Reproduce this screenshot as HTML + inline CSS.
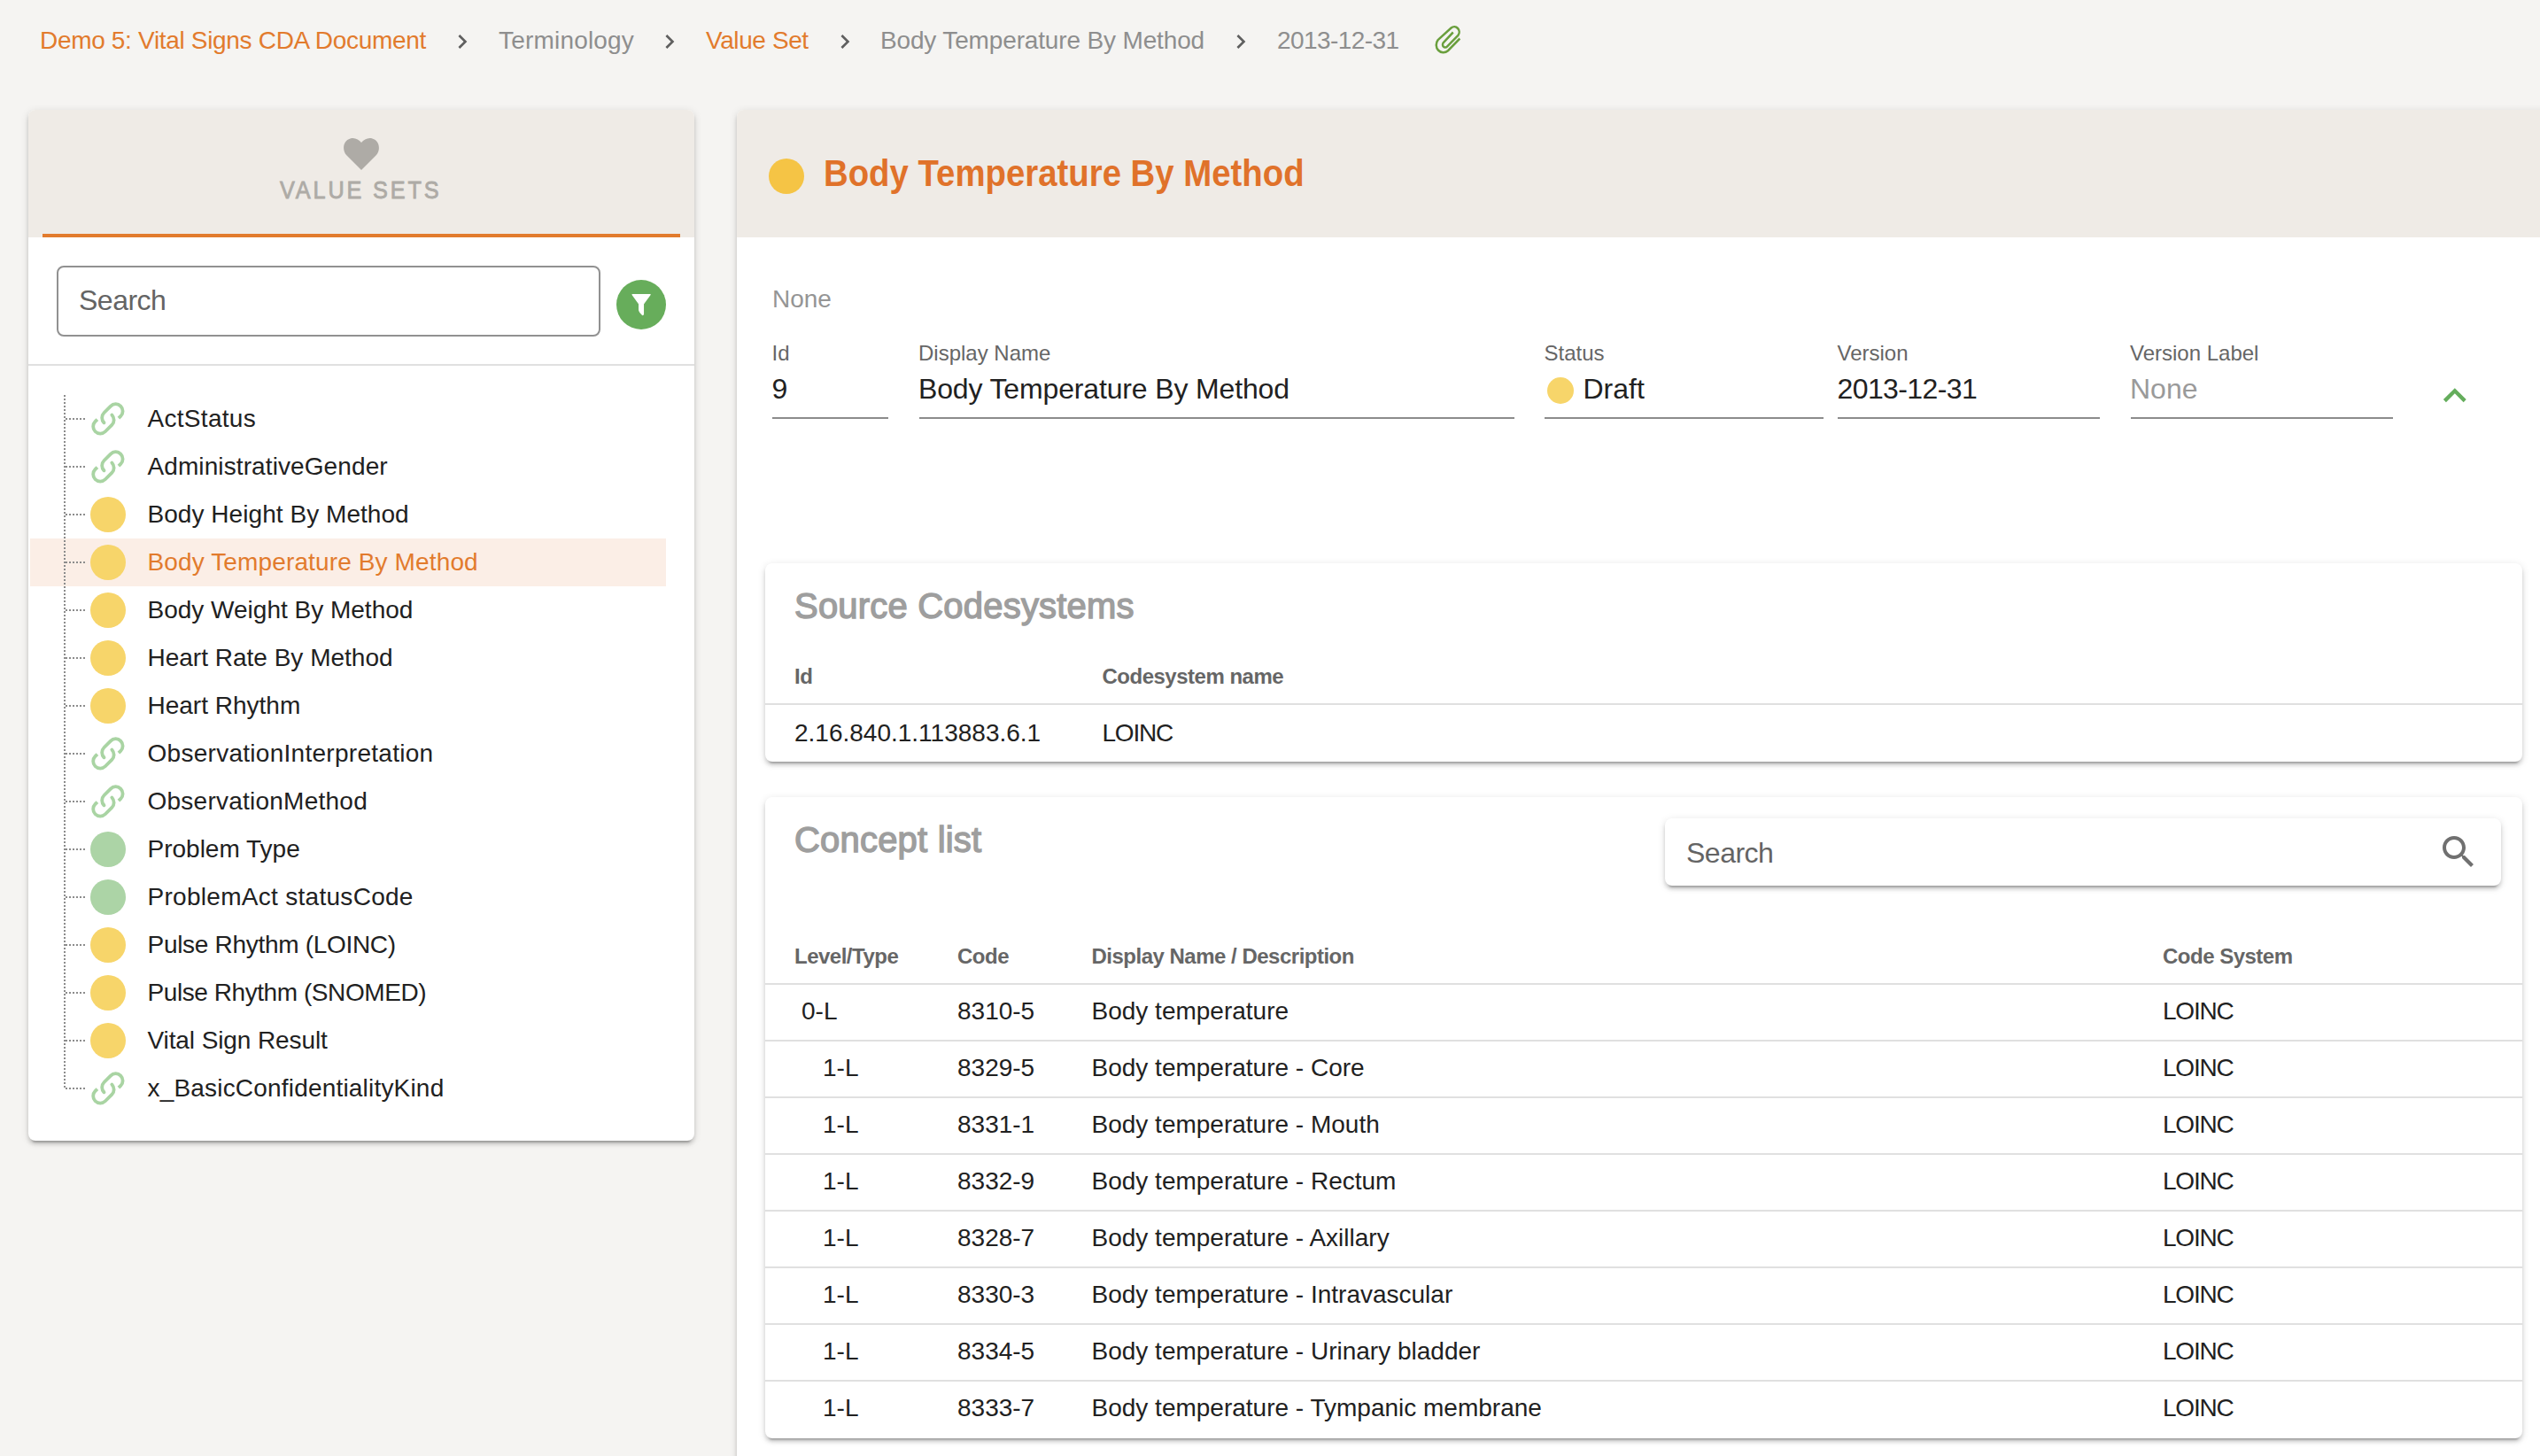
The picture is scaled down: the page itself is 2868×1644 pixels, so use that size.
<!DOCTYPE html>
<html><head><meta charset="utf-8"><title>Body Temperature By Method</title>
<style>
html,body{margin:0;padding:0;width:2868px;height:1644px;overflow:hidden;background:#f5f4f2;}
body{position:relative;font-family:"Liberation Sans", sans-serif;}
.t{position:absolute;white-space:nowrap;line-height:1;}
.r{position:absolute;}
</style></head><body>
<div class="t" style="left:45.00px;top:32.30px;font-size:28px;color:#e27b2d;font-weight:400;letter-spacing:-0.32px;">Demo 5: Vital Signs CDA Document</div>
<svg class="r" style="left:506.4px;top:30.9px" width="32" height="32" viewBox="0 0 24 24"><path d="M10 6L8.59 7.41 13.17 12l-4.58 4.59L10 18l6-6z" fill="#5f5f5f"/></svg>
<div class="t" style="left:563.00px;top:32.30px;font-size:28px;color:#8e8e8e;font-weight:400;letter-spacing:0.19px;">Terminology</div>
<svg class="r" style="left:740.0px;top:30.9px" width="32" height="32" viewBox="0 0 24 24"><path d="M10 6L8.59 7.41 13.17 12l-4.58 4.59L10 18l6-6z" fill="#5f5f5f"/></svg>
<div class="t" style="left:797.00px;top:32.30px;font-size:28px;color:#e27b2d;font-weight:400;letter-spacing:-0.4px;">Value Set</div>
<svg class="r" style="left:937.5px;top:30.9px" width="32" height="32" viewBox="0 0 24 24"><path d="M10 6L8.59 7.41 13.17 12l-4.58 4.59L10 18l6-6z" fill="#5f5f5f"/></svg>
<div class="t" style="left:994.00px;top:32.30px;font-size:28px;color:#8e8e8e;font-weight:400;letter-spacing:-0.15px;">Body Temperature By Method</div>
<svg class="r" style="left:1385.0px;top:30.9px" width="32" height="32" viewBox="0 0 24 24"><path d="M10 6L8.59 7.41 13.17 12l-4.58 4.59L10 18l6-6z" fill="#5f5f5f"/></svg>
<div class="t" style="left:1442.00px;top:32.30px;font-size:28px;color:#8e8e8e;font-weight:400;letter-spacing:-0.56px;">2013-12-31</div>
<svg class="r" style="left:1600px;top:15px" width="70" height="60" viewBox="1600 15 70 60"><path transform="translate(1636 44) scale(1.03 1.1) translate(-1636 -44)" d="M1648 43.5 L1635 56 A7.8 7.8 0 0 1 1624 45 L1638.5 32.7 A5.4 5.4 0 0 1 1646.1 40.3 L1634 51.8 A2.8 2.8 0 0 1 1630 47.8 L1640.6 37.2" fill="none" stroke="#6a9f3d" stroke-width="2.4" stroke-linecap="butt"/></svg>
<div class="r" style="left:32px;top:124px;width:752px;height:1164px;background:#fff;border-radius:8px;box-shadow:0 6px 2px -4px rgba(0,0,0,.2),0 4px 4px 0 rgba(0,0,0,.14),0 2px 10px 0 rgba(0,0,0,.12);"></div>
<div class="r" style="left:32px;top:124px;width:752px;height:144px;background:#efebe6;border-radius:8px 8px 0 0;"></div>
<div class="r" style="left:48px;top:264px;width:720px;height:4px;background:#e27b2d;"></div>
<svg class="r" style="left:387px;top:155px" width="42" height="38" viewBox="0 0 42 38"><path d="M21 37 L4.5 20.5 C-1 15 0 4 8.5 1.5 C13.5 0 18 2.5 21 6 C24 2.5 28.5 0 33.5 1.5 C42 4 43 15 37.5 20.5 Z" fill="#aeaba6"/></svg>
<div class="t" style="left:315.50px;top:201.30px;font-size:28px;color:#aeaba6;font-weight:400;letter-spacing:3.2px;-webkit-text-stroke:0.9px #aeaba6;transform:scaleX(0.9);transform-origin:0 0;">VALUE SETS</div>
<div class="r" style="left:64px;top:300px;width:614px;height:80px;box-sizing:border-box;border:2px solid #919191;border-radius:8px;background:#fff;"></div>
<div class="t" style="left:89.00px;top:322.91px;font-size:32px;color:#646464;font-weight:400;letter-spacing:-0.5px;">Search</div>
<div class="r" style="left:696px;top:316px;width:56px;height:56px;background:#67ad5b;border-radius:50%;"></div>
<svg class="r" style="left:690px;top:310px" width="70" height="70" viewBox="690 310 70 70"><path d="M714 332.6 L734.2 332.6 L726.5 343.3 L726.5 355 L725.5 355.6 L722.5 352.3 Q721.6 351 721.6 349.5 L721.6 343.3 Z" fill="#fff" stroke="#fff" stroke-width="1.1" stroke-linejoin="round"/></svg>
<div class="r" style="left:32px;top:411px;width:752px;height:2px;background:#e0e0e0;"></div>
<div class="r" style="left:34px;top:608px;width:718px;height:54px;background:#fbeee6;"></div>
<div class="r" style="left:72px;top:446px;width:2px;height:783px;background:repeating-linear-gradient(to bottom,#8c8c8c 0 2px,transparent 2px 4px);"></div>
<div class="r" style="left:74px;top:472px;width:22px;height:2px;background:repeating-linear-gradient(to right,#8c8c8c 0 2px,transparent 2px 4px);"></div>
<svg class="r" style="left:103px;top:454px" width="38" height="38" viewBox="0 0 38 38"><g transform="translate(18.9 18.9) rotate(-45)" fill="none" stroke="#a9d4a3" stroke-width="3.8" stroke-linecap="butt"><path d="M9 8 L12.3 8 A8 8 0 0 0 12.3 -8 L1.8 -8 A8 8 0 0 0 -6.2 0"/><path d="M-9 -8 L-12.3 -8 A8 8 0 0 0 -12.3 8 L-1.8 8 A8 8 0 0 0 6.2 0"/><circle cx="-6.2" cy="0" r="1.9" fill="#a9d4a3" stroke="none"/><circle cx="6.2" cy="0" r="1.9" fill="#a9d4a3" stroke="none"/></g></svg>
<div class="t" style="left:166.50px;top:459.30px;font-size:28px;color:#212121;font-weight:400;letter-spacing:0.3px;">ActStatus</div>
<div class="r" style="left:74px;top:526px;width:22px;height:2px;background:repeating-linear-gradient(to right,#8c8c8c 0 2px,transparent 2px 4px);"></div>
<svg class="r" style="left:103px;top:508px" width="38" height="38" viewBox="0 0 38 38"><g transform="translate(18.9 18.9) rotate(-45)" fill="none" stroke="#a9d4a3" stroke-width="3.8" stroke-linecap="butt"><path d="M9 8 L12.3 8 A8 8 0 0 0 12.3 -8 L1.8 -8 A8 8 0 0 0 -6.2 0"/><path d="M-9 -8 L-12.3 -8 A8 8 0 0 0 -12.3 8 L-1.8 8 A8 8 0 0 0 6.2 0"/><circle cx="-6.2" cy="0" r="1.9" fill="#a9d4a3" stroke="none"/><circle cx="6.2" cy="0" r="1.9" fill="#a9d4a3" stroke="none"/></g></svg>
<div class="t" style="left:166.50px;top:513.30px;font-size:28px;color:#212121;font-weight:400;letter-spacing:0.1px;">AdministrativeGender</div>
<div class="r" style="left:74px;top:580px;width:22px;height:2px;background:repeating-linear-gradient(to right,#8c8c8c 0 2px,transparent 2px 4px);"></div>
<div class="r" style="left:102px;top:561px;width:40px;height:40px;background:#f7d56a;border-radius:50%;"></div>
<div class="t" style="left:166.50px;top:567.30px;font-size:28px;color:#212121;font-weight:400;letter-spacing:0.05px;">Body Height By Method</div>
<div class="r" style="left:74px;top:634px;width:22px;height:2px;background:repeating-linear-gradient(to right,#8c8c8c 0 2px,transparent 2px 4px);"></div>
<div class="r" style="left:102px;top:615px;width:40px;height:40px;background:#f7d56a;border-radius:50%;"></div>
<div class="t" style="left:166.50px;top:621.30px;font-size:28px;color:#e27b2d;font-weight:400;letter-spacing:0.13px;">Body Temperature By Method</div>
<div class="r" style="left:74px;top:688px;width:22px;height:2px;background:repeating-linear-gradient(to right,#8c8c8c 0 2px,transparent 2px 4px);"></div>
<div class="r" style="left:102px;top:669px;width:40px;height:40px;background:#f7d56a;border-radius:50%;"></div>
<div class="t" style="left:166.50px;top:675.30px;font-size:28px;color:#212121;font-weight:400;letter-spacing:0px;">Body Weight By Method</div>
<div class="r" style="left:74px;top:742px;width:22px;height:2px;background:repeating-linear-gradient(to right,#8c8c8c 0 2px,transparent 2px 4px);"></div>
<div class="r" style="left:102px;top:723px;width:40px;height:40px;background:#f7d56a;border-radius:50%;"></div>
<div class="t" style="left:166.50px;top:729.30px;font-size:28px;color:#212121;font-weight:400;letter-spacing:0px;">Heart Rate By Method</div>
<div class="r" style="left:74px;top:796px;width:22px;height:2px;background:repeating-linear-gradient(to right,#8c8c8c 0 2px,transparent 2px 4px);"></div>
<div class="r" style="left:102px;top:777px;width:40px;height:40px;background:#f7d56a;border-radius:50%;"></div>
<div class="t" style="left:166.50px;top:783.30px;font-size:28px;color:#212121;font-weight:400;letter-spacing:0px;">Heart Rhythm</div>
<div class="r" style="left:74px;top:850px;width:22px;height:2px;background:repeating-linear-gradient(to right,#8c8c8c 0 2px,transparent 2px 4px);"></div>
<svg class="r" style="left:103px;top:832px" width="38" height="38" viewBox="0 0 38 38"><g transform="translate(18.9 18.9) rotate(-45)" fill="none" stroke="#a9d4a3" stroke-width="3.8" stroke-linecap="butt"><path d="M9 8 L12.3 8 A8 8 0 0 0 12.3 -8 L1.8 -8 A8 8 0 0 0 -6.2 0"/><path d="M-9 -8 L-12.3 -8 A8 8 0 0 0 -12.3 8 L-1.8 8 A8 8 0 0 0 6.2 0"/><circle cx="-6.2" cy="0" r="1.9" fill="#a9d4a3" stroke="none"/><circle cx="6.2" cy="0" r="1.9" fill="#a9d4a3" stroke="none"/></g></svg>
<div class="t" style="left:166.50px;top:837.30px;font-size:28px;color:#212121;font-weight:400;letter-spacing:0.28px;">ObservationInterpretation</div>
<div class="r" style="left:74px;top:904px;width:22px;height:2px;background:repeating-linear-gradient(to right,#8c8c8c 0 2px,transparent 2px 4px);"></div>
<svg class="r" style="left:103px;top:886px" width="38" height="38" viewBox="0 0 38 38"><g transform="translate(18.9 18.9) rotate(-45)" fill="none" stroke="#a9d4a3" stroke-width="3.8" stroke-linecap="butt"><path d="M9 8 L12.3 8 A8 8 0 0 0 12.3 -8 L1.8 -8 A8 8 0 0 0 -6.2 0"/><path d="M-9 -8 L-12.3 -8 A8 8 0 0 0 -12.3 8 L-1.8 8 A8 8 0 0 0 6.2 0"/><circle cx="-6.2" cy="0" r="1.9" fill="#a9d4a3" stroke="none"/><circle cx="6.2" cy="0" r="1.9" fill="#a9d4a3" stroke="none"/></g></svg>
<div class="t" style="left:166.50px;top:891.30px;font-size:28px;color:#212121;font-weight:400;letter-spacing:0.24px;">ObservationMethod</div>
<div class="r" style="left:74px;top:958px;width:22px;height:2px;background:repeating-linear-gradient(to right,#8c8c8c 0 2px,transparent 2px 4px);"></div>
<div class="r" style="left:102px;top:939px;width:40px;height:40px;background:#acd4a6;border-radius:50%;"></div>
<div class="t" style="left:166.50px;top:945.30px;font-size:28px;color:#212121;font-weight:400;letter-spacing:0px;">Problem Type</div>
<div class="r" style="left:74px;top:1012px;width:22px;height:2px;background:repeating-linear-gradient(to right,#8c8c8c 0 2px,transparent 2px 4px);"></div>
<div class="r" style="left:102px;top:993px;width:40px;height:40px;background:#acd4a6;border-radius:50%;"></div>
<div class="t" style="left:166.50px;top:999.30px;font-size:28px;color:#212121;font-weight:400;letter-spacing:0.29px;">ProblemAct statusCode</div>
<div class="r" style="left:74px;top:1066px;width:22px;height:2px;background:repeating-linear-gradient(to right,#8c8c8c 0 2px,transparent 2px 4px);"></div>
<div class="r" style="left:102px;top:1047px;width:40px;height:40px;background:#f7d56a;border-radius:50%;"></div>
<div class="t" style="left:166.50px;top:1053.30px;font-size:28px;color:#212121;font-weight:400;letter-spacing:-0.3px;">Pulse Rhythm (LOINC)</div>
<div class="r" style="left:74px;top:1120px;width:22px;height:2px;background:repeating-linear-gradient(to right,#8c8c8c 0 2px,transparent 2px 4px);"></div>
<div class="r" style="left:102px;top:1101px;width:40px;height:40px;background:#f7d56a;border-radius:50%;"></div>
<div class="t" style="left:166.50px;top:1107.30px;font-size:28px;color:#212121;font-weight:400;letter-spacing:-0.43px;">Pulse Rhythm (SNOMED)</div>
<div class="r" style="left:74px;top:1174px;width:22px;height:2px;background:repeating-linear-gradient(to right,#8c8c8c 0 2px,transparent 2px 4px);"></div>
<div class="r" style="left:102px;top:1155px;width:40px;height:40px;background:#f7d56a;border-radius:50%;"></div>
<div class="t" style="left:166.50px;top:1161.30px;font-size:28px;color:#212121;font-weight:400;letter-spacing:-0.1px;">Vital Sign Result</div>
<div class="r" style="left:74px;top:1228px;width:22px;height:2px;background:repeating-linear-gradient(to right,#8c8c8c 0 2px,transparent 2px 4px);"></div>
<svg class="r" style="left:103px;top:1210px" width="38" height="38" viewBox="0 0 38 38"><g transform="translate(18.9 18.9) rotate(-45)" fill="none" stroke="#a9d4a3" stroke-width="3.8" stroke-linecap="butt"><path d="M9 8 L12.3 8 A8 8 0 0 0 12.3 -8 L1.8 -8 A8 8 0 0 0 -6.2 0"/><path d="M-9 -8 L-12.3 -8 A8 8 0 0 0 -12.3 8 L-1.8 8 A8 8 0 0 0 6.2 0"/><circle cx="-6.2" cy="0" r="1.9" fill="#a9d4a3" stroke="none"/><circle cx="6.2" cy="0" r="1.9" fill="#a9d4a3" stroke="none"/></g></svg>
<div class="t" style="left:166.50px;top:1215.30px;font-size:28px;color:#212121;font-weight:400;letter-spacing:0.19px;">x_BasicConfidentialityKind</div>
<div class="r" style="left:832px;top:124px;width:2068px;height:1576px;background:#fff;box-shadow:0 6px 2px -4px rgba(0,0,0,.2),0 4px 4px 0 rgba(0,0,0,.14),0 2px 10px 0 rgba(0,0,0,.12);border-radius:8px 0 0 0;"></div>
<div class="r" style="left:832px;top:124px;width:2068px;height:144px;background:#efebe6;border-radius:8px 0 0 0;"></div>
<div class="r" style="left:868px;top:179px;width:40px;height:40px;background:#f5c445;border-radius:50%;"></div>
<div class="t" style="left:929.50px;top:175.20px;font-size:42px;color:#e0722a;font-weight:700;letter-spacing:0px;transform:scaleX(0.913);transform-origin:0 0;">Body Temperature By Method</div>
<div class="t" style="left:872.00px;top:324.30px;font-size:28px;color:#959595;font-weight:400;letter-spacing:0px;">None</div>
<div class="t" style="left:871.50px;top:386.68px;font-size:24px;color:#666666;font-weight:400;letter-spacing:0px;">Id</div>
<div class="t" style="left:871.50px;top:422.91px;font-size:32px;color:#212121;font-weight:400;letter-spacing:0px;">9</div>
<div class="r" style="left:872px;top:471px;width:131px;height:2px;background:#8c8c8c;"></div>
<div class="t" style="left:1037.00px;top:386.68px;font-size:24px;color:#666666;font-weight:400;letter-spacing:0px;">Display Name</div>
<div class="t" style="left:1037.00px;top:422.91px;font-size:32px;color:#212121;font-weight:400;letter-spacing:-0.15px;">Body Temperature By Method</div>
<div class="r" style="left:1037.5px;top:471px;width:672.5px;height:2px;background:#8c8c8c;"></div>
<div class="t" style="left:1743.50px;top:386.68px;font-size:24px;color:#666666;font-weight:400;letter-spacing:0px;">Status</div>
<div class="t" style="left:1787.50px;top:422.91px;font-size:32px;color:#212121;font-weight:400;letter-spacing:0px;">Draft</div>
<div class="r" style="left:1744px;top:471px;width:315px;height:2px;background:#8c8c8c;"></div>
<div class="r" style="left:1747px;top:425.5px;width:30px;height:30.0px;background:#f7d56a;border-radius:50%;"></div>
<div class="t" style="left:2074.50px;top:386.68px;font-size:24px;color:#666666;font-weight:400;letter-spacing:0px;">Version</div>
<div class="t" style="left:2074.50px;top:422.91px;font-size:32px;color:#212121;font-weight:400;letter-spacing:-0.6px;">2013-12-31</div>
<div class="r" style="left:2075px;top:471px;width:296px;height:2px;background:#8c8c8c;"></div>
<div class="t" style="left:2405.00px;top:386.68px;font-size:24px;color:#666666;font-weight:400;letter-spacing:0px;">Version Label</div>
<div class="t" style="left:2405.00px;top:422.91px;font-size:32px;color:#9a9a9a;font-weight:400;letter-spacing:0px;">None</div>
<div class="r" style="left:2405.5px;top:471px;width:296.5px;height:2px;background:#8c8c8c;"></div>
<svg class="r" style="left:2746.1px;top:420.8px" width="51.6" height="51.6" viewBox="0 0 24 24"><path d="M12 8l-6 6 1.41 1.41L12 10.83l4.59 4.58L18 14z" fill="#64ad5c"/></svg>
<div class="r" style="left:864px;top:636px;width:1984px;height:224px;background:#fff;border-radius:8px;box-shadow:0 6px 2px -4px rgba(0,0,0,.2),0 4px 4px 0 rgba(0,0,0,.14),0 2px 10px 0 rgba(0,0,0,.12);"></div>
<div class="t" style="left:897.00px;top:664.14px;font-size:40px;color:#9e9e9e;font-weight:400;letter-spacing:0.2px;-webkit-text-stroke:1.4px #9e9e9e;">Source Codesystems</div>
<div class="t" style="left:897.00px;top:751.68px;font-size:24px;color:#666666;font-weight:700;letter-spacing:-0.5px;">Id</div>
<div class="t" style="left:1244.50px;top:751.68px;font-size:24px;color:#666666;font-weight:700;letter-spacing:-0.5px;">Codesystem name</div>
<div class="r" style="left:864px;top:794px;width:1984px;height:2px;background:#e0e0e0;"></div>
<div class="t" style="left:897.00px;top:814.30px;font-size:28px;color:#212121;font-weight:400;letter-spacing:0px;">2.16.840.1.113883.6.1</div>
<div class="t" style="left:1244.50px;top:814.30px;font-size:28px;color:#212121;font-weight:400;letter-spacing:-1.2px;">LOINC</div>
<div class="r" style="left:864px;top:900px;width:1984px;height:724px;background:#fff;border-radius:8px;box-shadow:0 6px 2px -4px rgba(0,0,0,.2),0 4px 4px 0 rgba(0,0,0,.14),0 2px 10px 0 rgba(0,0,0,.12);"></div>
<div class="t" style="left:897.00px;top:928.14px;font-size:40px;color:#9e9e9e;font-weight:400;letter-spacing:0.2px;-webkit-text-stroke:1.4px #9e9e9e;">Concept list</div>
<div class="r" style="left:1880px;top:924px;width:944px;height:76px;background:#fff;border-radius:8px;box-shadow:0 6px 2px -4px rgba(0,0,0,.2),0 4px 4px 0 rgba(0,0,0,.14),0 2px 10px 0 rgba(0,0,0,.12);"></div>
<div class="t" style="left:1904.00px;top:946.91px;font-size:32px;color:#646464;font-weight:400;letter-spacing:-0.5px;">Search</div>
<svg class="r" style="left:2752px;top:938px" width="48" height="48" viewBox="0 0 24 24"><path d="M15.5 14h-.79l-.28-.27C15.41 12.59 16 11.11 16 9.5 16 5.91 13.09 3 9.5 3S3 5.91 3 9.5 5.91 16 9.5 16c1.61 0 3.09-.59 4.23-1.57l.27.28v.79l5 4.99L20.49 19l-4.99-5zm-6 0C7.01 14 5 11.99 5 9.5S7.01 5 9.5 5 14 7.01 14 9.5 11.99 14 9.5 14z" fill="#707070"/></svg>
<div class="t" style="left:897.00px;top:1067.68px;font-size:24px;color:#666666;font-weight:700;letter-spacing:-0.5px;">Level/Type</div>
<div class="t" style="left:1081.00px;top:1067.68px;font-size:24px;color:#666666;font-weight:700;letter-spacing:-0.5px;">Code</div>
<div class="t" style="left:1232.50px;top:1067.68px;font-size:24px;color:#666666;font-weight:700;letter-spacing:-0.5px;">Display Name / Description</div>
<div class="t" style="left:2442.00px;top:1067.68px;font-size:24px;color:#666666;font-weight:700;letter-spacing:-0.5px;">Code System</div>
<div class="r" style="left:864px;top:1110px;width:1984px;height:2px;background:#e0e0e0;"></div>
<div class="t" style="left:905.00px;top:1128.30px;font-size:28px;color:#212121;font-weight:400;letter-spacing:0px;">0-L</div>
<div class="t" style="left:1081.00px;top:1128.30px;font-size:28px;color:#212121;font-weight:400;letter-spacing:0px;">8310-5</div>
<div class="t" style="left:1232.50px;top:1128.30px;font-size:28px;color:#212121;font-weight:400;letter-spacing:0px;">Body temperature</div>
<div class="t" style="left:2442.00px;top:1128.30px;font-size:28px;color:#212121;font-weight:400;letter-spacing:-1.2px;">LOINC</div>
<div class="r" style="left:864px;top:1174px;width:1984px;height:2px;background:#e0e0e0;"></div>
<div class="t" style="left:929.00px;top:1192.30px;font-size:28px;color:#212121;font-weight:400;letter-spacing:0px;">1-L</div>
<div class="t" style="left:1081.00px;top:1192.30px;font-size:28px;color:#212121;font-weight:400;letter-spacing:0px;">8329-5</div>
<div class="t" style="left:1232.50px;top:1192.30px;font-size:28px;color:#212121;font-weight:400;letter-spacing:0px;">Body temperature - Core</div>
<div class="t" style="left:2442.00px;top:1192.30px;font-size:28px;color:#212121;font-weight:400;letter-spacing:-1.2px;">LOINC</div>
<div class="r" style="left:864px;top:1238px;width:1984px;height:2px;background:#e0e0e0;"></div>
<div class="t" style="left:929.00px;top:1256.30px;font-size:28px;color:#212121;font-weight:400;letter-spacing:0px;">1-L</div>
<div class="t" style="left:1081.00px;top:1256.30px;font-size:28px;color:#212121;font-weight:400;letter-spacing:0px;">8331-1</div>
<div class="t" style="left:1232.50px;top:1256.30px;font-size:28px;color:#212121;font-weight:400;letter-spacing:0px;">Body temperature - Mouth</div>
<div class="t" style="left:2442.00px;top:1256.30px;font-size:28px;color:#212121;font-weight:400;letter-spacing:-1.2px;">LOINC</div>
<div class="r" style="left:864px;top:1302px;width:1984px;height:2px;background:#e0e0e0;"></div>
<div class="t" style="left:929.00px;top:1320.30px;font-size:28px;color:#212121;font-weight:400;letter-spacing:0px;">1-L</div>
<div class="t" style="left:1081.00px;top:1320.30px;font-size:28px;color:#212121;font-weight:400;letter-spacing:0px;">8332-9</div>
<div class="t" style="left:1232.50px;top:1320.30px;font-size:28px;color:#212121;font-weight:400;letter-spacing:0px;">Body temperature - Rectum</div>
<div class="t" style="left:2442.00px;top:1320.30px;font-size:28px;color:#212121;font-weight:400;letter-spacing:-1.2px;">LOINC</div>
<div class="r" style="left:864px;top:1366px;width:1984px;height:2px;background:#e0e0e0;"></div>
<div class="t" style="left:929.00px;top:1384.30px;font-size:28px;color:#212121;font-weight:400;letter-spacing:0px;">1-L</div>
<div class="t" style="left:1081.00px;top:1384.30px;font-size:28px;color:#212121;font-weight:400;letter-spacing:0px;">8328-7</div>
<div class="t" style="left:1232.50px;top:1384.30px;font-size:28px;color:#212121;font-weight:400;letter-spacing:0px;">Body temperature - Axillary</div>
<div class="t" style="left:2442.00px;top:1384.30px;font-size:28px;color:#212121;font-weight:400;letter-spacing:-1.2px;">LOINC</div>
<div class="r" style="left:864px;top:1430px;width:1984px;height:2px;background:#e0e0e0;"></div>
<div class="t" style="left:929.00px;top:1448.30px;font-size:28px;color:#212121;font-weight:400;letter-spacing:0px;">1-L</div>
<div class="t" style="left:1081.00px;top:1448.30px;font-size:28px;color:#212121;font-weight:400;letter-spacing:0px;">8330-3</div>
<div class="t" style="left:1232.50px;top:1448.30px;font-size:28px;color:#212121;font-weight:400;letter-spacing:0px;">Body temperature - Intravascular</div>
<div class="t" style="left:2442.00px;top:1448.30px;font-size:28px;color:#212121;font-weight:400;letter-spacing:-1.2px;">LOINC</div>
<div class="r" style="left:864px;top:1494px;width:1984px;height:2px;background:#e0e0e0;"></div>
<div class="t" style="left:929.00px;top:1512.30px;font-size:28px;color:#212121;font-weight:400;letter-spacing:0px;">1-L</div>
<div class="t" style="left:1081.00px;top:1512.30px;font-size:28px;color:#212121;font-weight:400;letter-spacing:0px;">8334-5</div>
<div class="t" style="left:1232.50px;top:1512.30px;font-size:28px;color:#212121;font-weight:400;letter-spacing:0px;">Body temperature - Urinary bladder</div>
<div class="t" style="left:2442.00px;top:1512.30px;font-size:28px;color:#212121;font-weight:400;letter-spacing:-1.2px;">LOINC</div>
<div class="r" style="left:864px;top:1558px;width:1984px;height:2px;background:#e0e0e0;"></div>
<div class="t" style="left:929.00px;top:1576.30px;font-size:28px;color:#212121;font-weight:400;letter-spacing:0px;">1-L</div>
<div class="t" style="left:1081.00px;top:1576.30px;font-size:28px;color:#212121;font-weight:400;letter-spacing:0px;">8333-7</div>
<div class="t" style="left:1232.50px;top:1576.30px;font-size:28px;color:#212121;font-weight:400;letter-spacing:0px;">Body temperature - Tympanic membrane</div>
<div class="t" style="left:2442.00px;top:1576.30px;font-size:28px;color:#212121;font-weight:400;letter-spacing:-1.2px;">LOINC</div>
</body></html>
